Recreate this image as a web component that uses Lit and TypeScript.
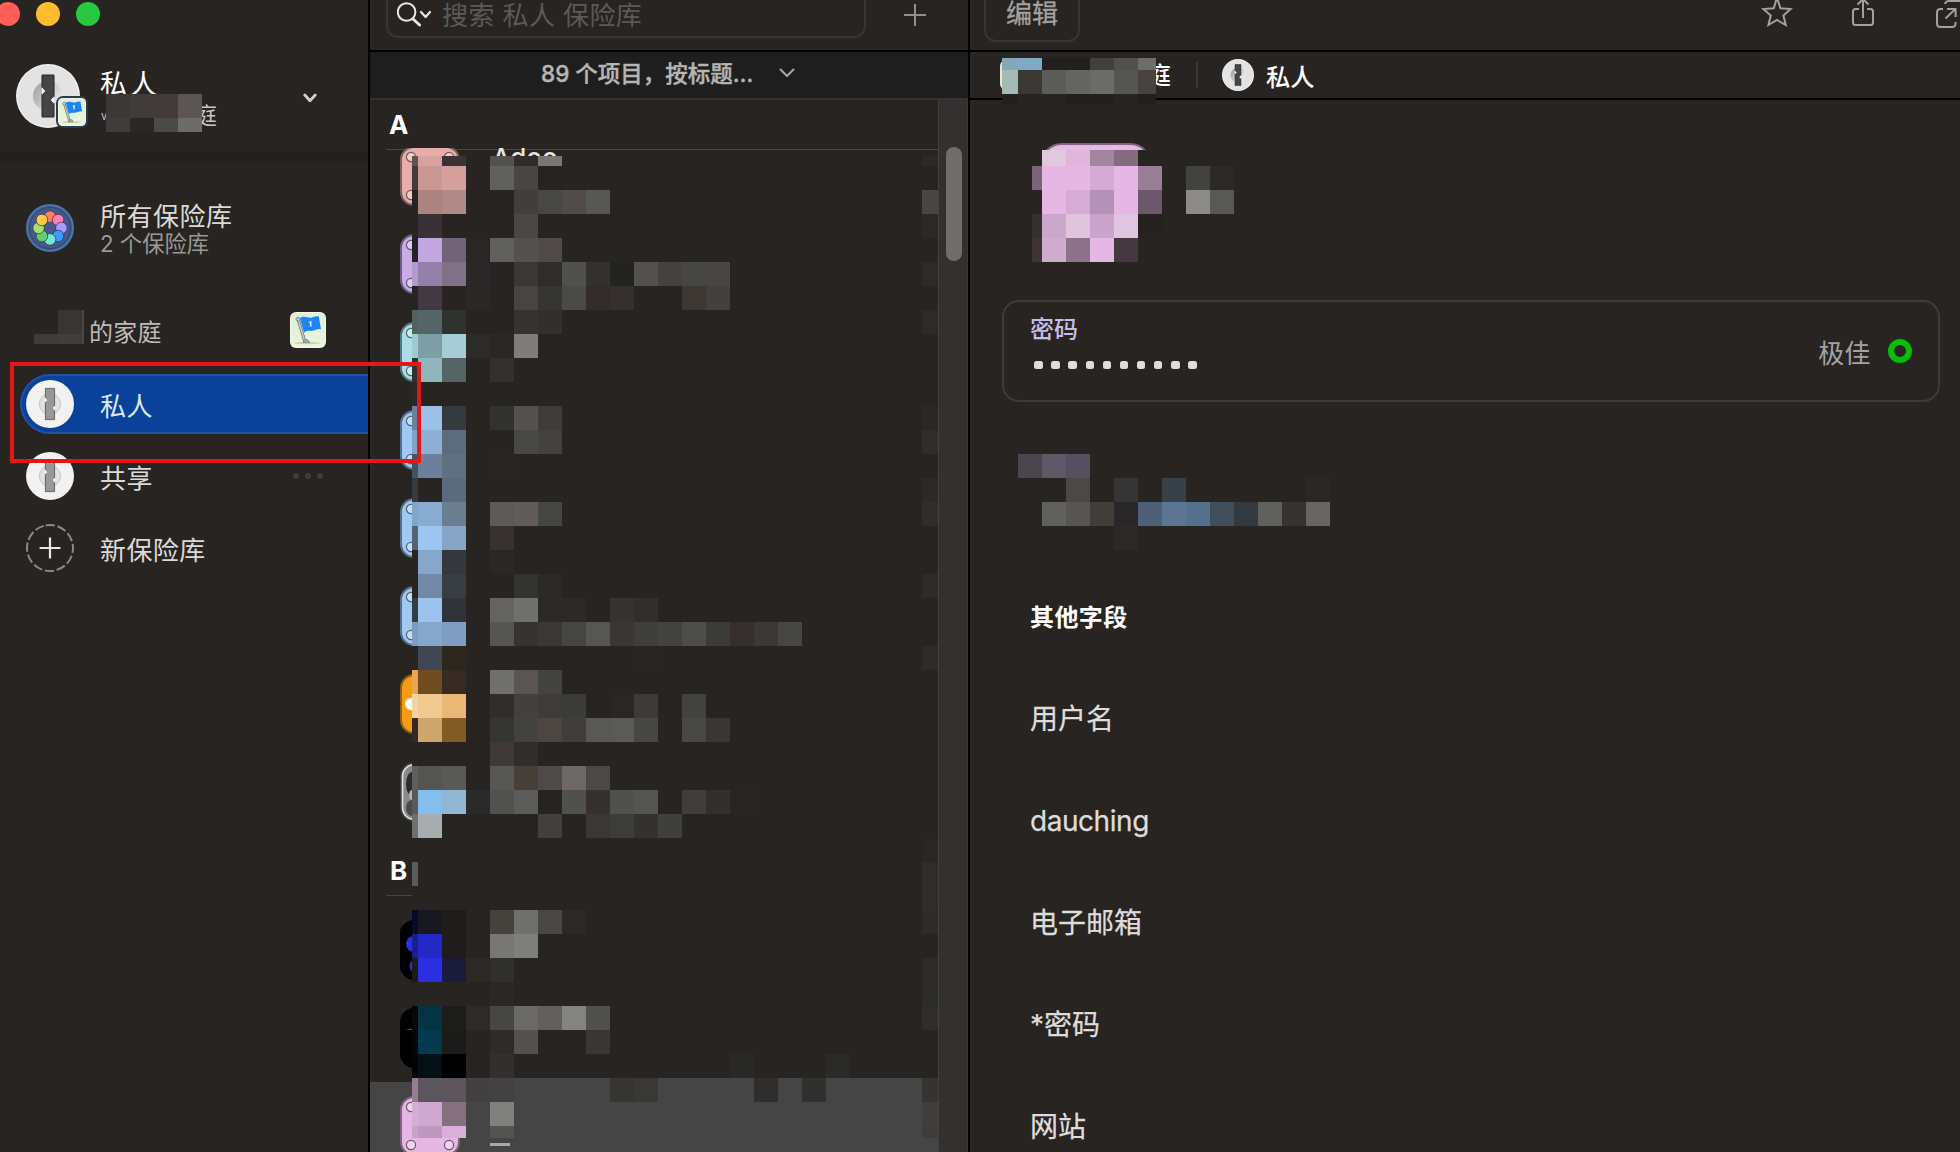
import { LitElement, html, css, svg } from "lit";
import { customElement, property } from "lit/decorators.js";

/** One filled block of a pixelated area: x, y, width, height, colour. */
type Block = [number, number, number, number, string];

const BG = "#272421";

/** Column 0 is a 6px sliver, column R is the 16px strip beside the scrollbar. */
const LIST_ROWS: string[] = [
  "0:5e5452 1:d8a19f 2:3d3232 4:51524f 5:302c29 6:787775 R:2c2926",
  "0:463a39 1:ca9894 2:d49f9c 4:60615e 5:4a4543 6:282321",
  "1:ad837f 2:b08a86 5:423e3a 6:474845 7:514b49 8:575754 R:484544",
  "1:383136 5:4b4743 R:2c2826",
  "0:242123 1:c2a6e0 2:716479 3:2a2626 4:60605e 5:555150 6:504b48",
  "0:b698d0 1:957fab 2:827089 3:2b2728 5:3c3734 6:302c2a 7:50514f 8:34302d 9:232322 10:555150 11:46413e 12:464744 13:494543 R:2d2a29",
  "1:423943 3:2b2725 5:484541 6:353634 7:4a4b48 8:322d2b 9:35302d 12:3d3834 13:444040",
  "0:536163 1:546567 2:303230 5:353231 6:332f2e R:2d2a27",
  "0:9ecbd1 1:7e9ea6 2:a6cdd6 3:2d2b29 4:2b2727 5:7e7d7a",
  "0:2d3333 1:90b6be 2:556465 4:34302e",
  "0:292928",
  "0:68829b 1:9ac2ea 2:343a3e 4:32322f 5:555150 6:403b39 R:2a2726",
  "0:7fa2c7 1:8eb0d7 2:5c6b7e 5:484845 6:454140 R:302d2c",
  "0:475260 1:6c809c 2:607080 4:282522",
  "0:353b40 2:5b6a7c R:2c2926",
  "0:83a5ca 1:88acd2 2:6b7d91 4:5b5a57 5:615c5a 6:454643 R:302d2c",
  "0:55626f 1:9cc6ef 2:88a4c4 4:373231",
  "1:85a7cc 2:34383e 4:2b2724",
  "1:708aa8 2:383d41 5:333331 6:2c2928 R:2e2b2a",
  "0:353b40 1:9bc3ee 2:30333a 4:646360 5:70716d 6:2c2828 7:2b2a28 9:38332f 10:322e2c",
  "0:7c9cc0 1:85a7cc 2:7e9dc0 4:555552 5:38332f 6:3a3734 7:454643 8:565754 9:3a3634 10:3e3f3d 11:434341 12:4d4e4b 13:3b3b38 14:35302d 15:3c3834 16:464744",
  "1:3f4852 2:2c261f 10:292525 R:2e2b2a",
  "0:e9a551 1:6f4d20 2:372a22 4:70716d 5:5a5553 6:434441",
  "0:f5d2a4 1:f0c890 2:e9b876 4:312d2a 5:444040 6:3e3b38 7:3b3b38 9:2a2622 10:3e3a37 12:424340",
  "0:352a21 1:cfa76c 2:835c25 4:353633 5:42433f 6:4b4642 7:413d3b 8:585956 9:5a5b57 10:464744 12:484946 13:3b3634",
  "4:3f3a38 5:312d2a",
  "0:5f5f5d 1:555554 2:595957 4:575855 5:464039 6:4e4a48 7:6d6866 8:4c4846",
  "0:595958 1:82bfed 2:91b7d4 3:292b2b 4:525350 5:5c5c59 6:262321 7:50514e 8:36312e 9:50514e 10:555653 12:413d3b 13:332f2b 14:292525",
  "0:6f7070 1:a8aeb0 6:423f3d 8:3b3735 9:3c3c39 10:35312e 11:3f403d",
  "R:292624",
  "0:5b5b59 R:302c2a",
  "R:302c2a",
  "0:080a2c 1:171821 2:1e1d1b 4:46423e 5:70716d 6:4b4746 7:2b2826 R:2e2b2a",
  "0:1b1e8c 1:2529c3 2:201c1b 4:787774 5:7f7f7c",
  "0:1c1a1a 1:2a2fe0 2:191c3a 3:2b2826 4:30312f R:2e2b2a",
  "4:2b2726 R:2c2c2b",
  "0:080707 1:023444 2:1c1c1a 3:2e2a27 4:464744 5:6a6966 6:61605d 7:83837f 8:50514e R:312d2c",
  "0:040606 1:023a4d 2:1b1b19 4:2f2b28 5:555150 8:3a3635",
  "0:030404 1:031117 2:000000 4:342f2f 14:282826 18:2a2b29",
  "0:977c94 1:5d555d 2:5d555c 3:434041 4:444142 9:373532 10:3a3835 15:2f2e2c 17:30302e R:363431",
  "0:d4aed4 1:cfa7d0 2:84707f 4:80817f R:403e3d",
  "0:c8a2c8 1:be98be 2:dbafdc 4:535352 R:3f3d3c",
];

/** Expands the row strings into blocks, relative to (412, 156) of the window. */
function listBlocks(): Block[] {
  const out: Block[] = [
    [0, 0, 526, 922, BG],
    [0, 922, 526, 60, "#454545"],
  ];
  LIST_ROWS.forEach((row, r) => {
    const y = r === 0 ? 0 : 10 + 24 * (r - 1);
    const h = r === 0 ? 10 : r === 41 ? 12 : 24;
    for (const cell of row.split(" ")) {
      const [c, colour] = cell.split(":");
      const x = c === "R" ? 510 : c === "0" ? 0 : 6 + 24 * (Number(c) - 1);
      const w = c === "R" ? 16 : c === "0" ? 6 : 24;
      out.push([x, y, w, h, "#" + colour]);
    }
  });
  return out;
}

const ACCOUNT_BLOCKS: Block[] = [
  [0, 0, 24, 24, "#3c3837"], [24, 0, 48, 24, "#413c3a"], [72, 0, 24, 24, "#5b5655"],
  [0, 24, 24, 14, "#3f3c3b"], [24, 24, 24, 14, "#2a2725"], [48, 24, 24, 14, "#4a4a47"], [72, 24, 24, 14, "#6c6c69"],
];

const FAMILY_BLOCKS: Block[] = [
  [24, 0, 24, 24, "#393533"], [48, 0, 2, 34, "#4a4746"],
  [0, 24, 24, 10, "#3e3b3a"], [24, 24, 24, 10, "#413d3c"],
];

const CRUMB_BLOCKS: Block[] = [
  [0, 0, 154, 36, BG],
  [0, 0, 16, 12, "#84a8b8"], [16, 0, 24, 12, "#7faac6"], [40, 0, 48, 12, "#221f1f"],
  [88, 0, 24, 12, "#423f3d"], [112, 0, 24, 12, "#50514e"], [136, 0, 18, 12, "#6d6e6b"],
  [0, 12, 16, 24, "#a4bab5"], [16, 12, 24, 24, "#3a3936"], [40, 12, 24, 24, "#5b5b58"],
  [64, 12, 24, 24, "#646461"], [88, 12, 24, 24, "#6b6b68"], [112, 12, 24, 24, "#555552"], [136, 12, 18, 24, "#494340"],
  [0, 36, 154, 10, BG],
  [0, 36, 16, 10, "#221f1f"], [64, 36, 48, 10, "#221f1f"], [136, 36, 18, 10, "#221f1f"],
];

const TITLE_BLOCKS: Block[] = [
  [0, 0, 130, 112, BG],
  [10, 0, 24, 16, "#e0c8df"], [34, 0, 24, 16, "#e0b5de"], [58, 0, 24, 16, "#a485a1"], [82, 0, 24, 16, "#846b80"],
  [0, 16, 10, 24, "#7c647b"], [10, 16, 48, 24, "#e6b6e4"], [58, 16, 24, 24, "#d5abd3"], [82, 16, 24, 24, "#e6b6e4"], [106, 16, 24, 24, "#9a7e98"],
  [10, 40, 24, 24, "#e6b6e4"], [34, 40, 24, 24, "#d6acd5"], [58, 40, 24, 24, "#b491b7"], [82, 40, 24, 24, "#e6b6e4"], [106, 40, 24, 24, "#6d596b"],
  [0, 64, 10, 24, "#352f31"], [10, 64, 24, 24, "#caa7cb"], [34, 64, 24, 24, "#e2c3df"], [58, 64, 24, 24, "#caa2cc"], [82, 64, 24, 24, "#dfc5df"], [106, 64, 24, 24, "#262222"],
  [0, 88, 10, 24, "#3e3438"], [10, 88, 24, 24, "#d0abce"], [34, 88, 24, 24, "#8c738b"], [58, 88, 24, 24, "#e6b6e4"], [82, 88, 24, 24, "#43383d"],
  [154, 16, 24, 24, "#42433f"], [178, 16, 24, 24, "#2d2929"], [154, 40, 24, 24, "#8c8b87"], [178, 40, 24, 24, "#585956"],
];

const WEBSITE_BLOCKS: Block[] = [
  [0, 0, 24, 24, "#48454c"], [24, 0, 24, 24, "#5e5967"], [48, 0, 24, 24, "#55505e"],
  [48, 24, 24, 24, "#4c4846"], [96, 24, 24, 24, "#353536"], [144, 24, 24, 24, "#384048"], [288, 24, 24, 24, "#2b2725"],
  [24, 48, 24, 24, "#60605d"], [48, 48, 24, 24, "#585453"], [72, 48, 24, 24, "#413d39"], [96, 48, 24, 24, "#282628"],
  [120, 48, 24, 24, "#4c6077"], [144, 48, 24, 24, "#5b7593"], [168, 48, 24, 24, "#54708c"], [192, 48, 24, 24, "#404d5a"],
  [216, 48, 24, 24, "#333a3f"], [240, 48, 24, 24, "#60605e"], [264, 48, 24, 24, "#38332f"], [288, 48, 24, 24, "#676664"],
  [96, 72, 24, 24, "#2c2926"],
];

function mosaic(cls: string, w: number, h: number, blocks: Block[]) {
  return html`<svg class="mosaic ${cls}" width=${w} height=${h} shape-rendering="crispEdges">
    ${blocks.map(([x, y, bw, bh, c]) => svg`<rect x=${x} y=${y} width=${bw} height=${bh} fill=${c} />`)}
  </svg>`;
}

/** Round vault emblem: a disc with a notched keyhole bar. */
@customElement("vault-disc")
export class VaultDisc extends LitElement {
  @property() tone: "light" | "dark" = "light";
  static styles = css`
    :host { display: block; }
    svg { display: block; width: 100%; height: 100%; }
  `;
  render() {
    return this.tone === "dark"
      ? html`<svg viewBox="0 0 64 64">
          <defs>
            <linearGradient id="d" x1="0" y1="0" x2="1" y2="0.6"><stop offset="0" stop-color="#9a9a9a" /><stop offset="1" stop-color="#ededed" /></linearGradient>
          </defs>
          <circle cx="32" cy="32" r="32" fill="#e3e3e3" />
          <circle cx="32" cy="32" r="31" fill="none" stroke="#f1f1f1" stroke-width="1" />
          <circle cx="32" cy="32" r="15" fill="url(#d)" />
          <path d="M26 11H38V32.5L34.8 36L38 39.5V53H26V30.5L29.2 27L26 23.5Z" fill="#454545" stroke="#262626" stroke-width="1" />
          <path d="M26 23.5L29.4 27L26 30.5ZM38 32.5L34.6 36L38 39.5Z" fill="#f2f2f2" />
        </svg>`
      : html`<svg viewBox="0 0 48 48">
          <circle cx="24" cy="24" r="24" fill="#f2f2f2" />
          <circle cx="24" cy="24" r="10.6" fill="#e2e2e2" stroke="#bdbdbd" stroke-width="0.8" />
          <path d="M19.4 8.4H28.6V26L26.4 28L28.6 30.4V39.6H19.4V22L21.6 20L19.4 17.6Z" fill="#989898" stroke="#4e4e4e" stroke-width="0.8" />
          <path d="M18.8 17.4L21.8 20L18.8 22.4ZM29.2 25.6L26.2 28L29.2 30.8Z" fill="#f2f2f2" />
        </svg>`;
  }
}

/** Square badge with a blue flag on a pole. */
@customElement("flag-badge")
export class FlagBadge extends LitElement {
  static styles = css`
    :host { display: block; }
    svg { display: block; width: 100%; height: 100%; }
  `;
  render() {
    return html`<svg viewBox="0 0 36 36">
      <defs>
        <linearGradient id="g" x1="0" y1="0" x2="0" y2="1"><stop offset="0" stop-color="#ddeed9" /><stop offset="1" stop-color="#edf4dc" /></linearGradient>
      </defs>
      <rect width="36" height="36" rx="6" fill="#f1f8e6" />
      <rect x="1" y="1" width="34" height="34" rx="5" fill="url(#g)" />
      <ellipse cx="17" cy="31" rx="13" ry="1.2" fill="#c9d1bb" />
      <path d="M8.2 7.5L14.6 29" stroke="#6b7275" stroke-width="3" stroke-linecap="round" />
      <path d="M8.2 7.5L14.6 29" stroke="#c9ced0" stroke-width="1.5" stroke-linecap="round" />
      <circle cx="8" cy="7.2" r="2" fill="#c2c7ca" stroke="#71777a" stroke-width="0.8" />
      <path d="M13 30.6Q13.5 27.6 16 27.4Q18.8 27.4 19.6 30.6Z" fill="#a6acae" stroke="#6b7275" stroke-width="0.6" />
      <path d="M10 6.4C14 2.9 18 6.6 22 5.4C25 4.6 27 4.2 29 4.4C29.2 9 30.6 13 31 17.4C27 16.2 25.4 19 21.4 19C18.4 18.8 16.6 18.4 14 20.6Z" fill="#1a85f5" />
      <path d="M19.2 9.8L21.4 9V14.6H20V11.2H19.2Z" fill="#fff" />
    </svg>`;
  }
}

@customElement("item-tile")
export class ItemTile extends LitElement {
  @property() kind = "rivet";
  @property() fill = "#9fc9f3";
  @property() edge = "#55708c";
  static styles = css`
    :host { display: block; width: 60px; height: 60px; flex: none; }
    svg { display: block; }
  `;
  render() {
    const body = svg`<rect x="1" y="1" width="58" height="58" rx="13" fill=${this.fill} stroke=${this.edge} stroke-width="2" />`;
    const details =
      this.kind === "rivet"
        ? [[11, 11], [49, 11], [11, 49], [49, 49]].map(
            ([x, y]) => svg`<circle cx=${x} cy=${y} r="4.6" fill="#fff" fill-opacity="0.4" stroke="#3b3a40" stroke-opacity="0.75" stroke-width="1.2" />`)
        : this.kind === "dot"
          ? svg`<circle cx="11" cy="30" r="6" fill="#fff" />`
          : this.kind === "mono"
            ? svg`<rect x="2.5" y="2.5" width="55" height="55" rx="12" fill="#8a8a8a" stroke="#e4e4e4" stroke-width="1.6" /><ellipse cx="12" cy="22" rx="6" ry="12" fill="#2c2c2c" /><ellipse cx="12" cy="33" rx="3" ry="5" fill="#b5b5b5" /><ellipse cx="12" cy="46" rx="6" ry="8" fill="#4a4a4a" />`
            : this.kind === "blue"
              ? svg`<circle cx="14" cy="24" r="8" fill="#2a2fe0" /><circle cx="17" cy="46" r="7.5" fill="#2a2fe0" />`
              : this.kind === "wing"
                ? svg`<path d="M5 22L12 20.4V22Z" fill="#1f6678" />`
                : null;
    return html`<svg width="60" height="60">${body}${details}</svg>`;
  }
}

const PETALS = ["#ff7d60", "#ff7db2", "#a89bff", "#3b9bff", "#73e8cb", "#64cd74", "#a1e16c", "#ffca47"];

@customElement("app-root")
export class AppRoot extends LitElement {
  static styles = css`
    :host {
      display: block; width: 1960px; height: 1152px; overflow: hidden; position: relative;
      background: #272421; color: #dcdad8;
      font-family: "Inter", "Noto Sans CJK SC", sans-serif; font-size: 26px;
    }
    * { box-sizing: border-box; }
    svg { display: block; flex: none; }
    .window { display: grid; grid-template-columns: 368px 598px 1fr; column-gap: 2px; height: 1152px; background: #000; }
    .pane { background: #272421; min-width: 0; overflow: hidden; position: relative; white-space: nowrap; }
    .mosaic { position: absolute; }

    .lights { display: flex; gap: 16px; margin-left: -4px; padding-top: 2px; }
    .light { width: 24px; height: 24px; border-radius: 50%; }
    .red { background: #ff5f57; } .yellow { background: #febc2e; } .green { background: #28c840; }
    .account { display: flex; height: 64px; margin-top: 38px; padding-left: 16px; position: relative; }
    .avatar { width: 64px; height: 64px; }
    .avatar-badge { position: absolute; left: 56px; top: 32px; width: 32px; height: 32px; padding: 2px; border-radius: 7px; background: #2b3a4d; }
    .account-text { margin-left: 20px; width: 203px; color: #fff; }
    .account-name { height: 36px; line-height: 36px; letter-spacing: 3px; font-size: 27px; margin-top: 3px; }
    .account-sub { height: 26px; line-height: 26px; font-size: 22.5px; color: #c9c7c5; display: flex; justify-content: space-between; width: 117px; }
    .account-initial { font-size: 11px; padding-left: 1px; }
    .account svg.chev { margin-top: 28px; }
    .m-account { left: 106px; top: 30px; }
    .band { height: 12px; margin-top: 24px; background: linear-gradient(#221f1f, #242120 60%, #272421); }
    .all { display: flex; align-items: center; height: 64px; margin-top: 32px; padding-left: 26px; gap: 26px; }
    .all-title { height: 34px; line-height: 34px; letter-spacing: 0.5px; }
    .all-sub { height: 26px; line-height: 26px; font-size: 22.3px; color: #9b9997; margin-top: -4px; padding-top: 1px; }
    .family { display: flex; align-items: center; justify-content: space-between; height: 36px; margin-top: 52px; padding: 0 42px 0 89px; font-size: 24px; color: #bebcba; position: relative; }
    .family flag-badge { width: 36px; height: 36px; }
    .family-name { letter-spacing: 0.2px; }
    .m-family { left: 34px; top: -2px; }
    .vaults { display: flex; flex-direction: column; gap: 12px; margin-top: 26px; padding-left: 20px; }
    .vault { display: flex; align-items: center; height: 60px; padding-left: 6px; gap: 26px; letter-spacing: 0.4px; }
    .vault vault-disc { width: 48px; height: 48px; }
    .vault-label { padding-top: 1px; flex: 1; }
    .vault .more { display: flex; gap: 6px; margin-right: 45px; }
    .more-dot { width: 6px; height: 6px; border-radius: 50%; background: #403d3b; }
    .vault.on { background: #0a429b; border: 2px solid #1d52a5; border-right: 0; border-radius: 30px 0 0 30px; padding-left: 4px; color: #dfe7f5; }

    .list { display: flex; flex-direction: column; }
    .list-tools { height: 50px; display: flex; padding-left: 16px; }
    .search { width: 480px; height: 52px; margin-top: -14px; border: 2px solid #383533; border-radius: 12px; padding: 5px 0 0 9px; display: flex; align-items: center; gap: 11px; color: #5c5957; letter-spacing: 0.4px; }
    .search-hint { padding-bottom: 3px; }
    .add { margin: 4px 0 0 38px; }
    .sort { height: 50px; border-top: 2px solid #000; border-bottom: 2px solid #343232; background: #1e1e1e; display: flex; align-items: center; padding: 0 0 7px 171px; gap: 26px; font-size: 22.5px; font-weight: 500; color: #b7b5b4; -webkit-text-stroke: 0.4px #b7b5b4; }
    .scroller { flex: 1; display: flex; position: relative; min-height: 0; }
    .items { width: 568px; padding-top: 32px; overflow: hidden; }
    .track { width: 30px; background: #343030; border-left: 1px solid #434040; padding: 47px 0 0 7px; border-right: 1px solid #3a3737; }
    .thumb { width: 16px; height: 114px; border-radius: 8px; background: #6f6e6c; }
    .letter { position: absolute; left: 0; top: 0; width: 568px; height: 48px; background: #272421; padding-left: 19px; line-height: 50px; font-weight: 700; color: #fff; }
    .rule { position: absolute; left: 16px; right: 30px; top: 49px; height: 1px; background: #484544; }
    .group { height: 70px; padding-left: 20px; line-height: 70px; font-weight: 700; color: #fff; position: relative; }
    .group-rule { position: absolute; left: 16px; top: 59px; width: 500px; height: 1px; background: #484544; }
    .row { display: flex; height: 88px; padding: 14px 0 0 30px; gap: 32px; position: relative; }
    .row.on { background: #454545; }
    .row-name { line-height: 32px; margin-top: -4px; color: #e8e6e5; font-weight: 500; }
    .row-dash { width: 20px; height: 3px; background: #aaa9a9; margin: 47px 0 0 -2px; }
    .m-list { left: 42px; top: 156px; }

    .tools { height: 50px; display: flex; padding-left: 14px; }
    .edit { width: 96px; height: 42px; border: 2px solid #383533; border-top: 0; border-radius: 0 0 12px 12px; line-height: 28px; text-align: center; color: #a3a19f; -webkit-text-stroke: 0.3px #a3a19f; }
    .icons { margin-left: auto; }
    .crumbs { height: 50px; border-top: 2px solid #000; border-bottom: 2px solid #000; display: flex; align-items: center; padding-left: 30px; font-size: 24.2px; font-weight: 500; color: #fff; position: relative; }
    .crumb-badge { width: 30px; height: 30px; border-radius: 6px; background: #dfebd3; }
    .crumb-family { width: 141px; text-align: right; line-height: 44px; padding-top: 1px; }
    .crumb-sep { width: 2px; height: 26px; background: #3b3836; margin: 0 24px 0 25px; }
    .crumbs vault-disc { width: 32px; height: 32px; margin-right: 12px; }
    .m-crumbs { left: 32px; top: 6px; }
    .hero { height: 200px; padding: 43px 0 0 70px; position: relative; }
    .hero-tile { width: 112px; height: 112px; border-radius: 22px; background: #e8b8e6; border: 2px solid #7d667d; }
    .m-hero { left: 62px; top: 50px; }
    .card { height: 102px; margin: 0 20px 0 32px; border: 2px solid #3e3c3b; border-radius: 17px; display: flex; align-items: center; padding: 0 26px; }
    .card-main { flex: 1; height: 98px; }
    .label { font-size: 24px; font-weight: 500; color: #c5bde8; height: 30px; line-height: 30px; margin-top: 13px; }
    .dots { display: flex; gap: 8.6px; margin: 15.5px 0 0 4.3px; }
    .dot { width: 8.5px; height: 8.5px; border-radius: 2.5px; background: #dfdddc; }
    .grade { color: #a5a3a1; margin-right: 17px; letter-spacing: 0.4px; }
    .ring { width: 24px; height: 24px; border-radius: 50%; border: 6px solid #06be06; margin-top: -1px; }
    .site { height: 148px; position: relative; }
    .m-site { left: 48px; top: 52px; }
    .fields { padding: 51px 0 0 60px; font-size: 28px; color: #dfdddc; -webkit-text-stroke: 0.25px #dfdddc; }
    .fields-title { font-size: 24px; font-weight: 700; color: #fff; height: 34px; line-height: 34px; letter-spacing: 0.4px; -webkit-text-stroke: 0; }
    .field { height: 102px; line-height: 102px; }
    .field.latin { letter-spacing: -0.45px; }
    .fields-title + .field { margin-top: 32.5px; }

    .callout { position: absolute; left: 10px; top: 362px; width: 411px; height: 101px; border: 4px solid #e41717; }
  `;

  private renderSidebar() {
    return html`<aside class="pane">
      <div class="lights"><div class="light red"></div><div class="light yellow"></div><div class="light green"></div></div>
      <div class="account">
        <vault-disc class="avatar" tone="dark"></vault-disc>
        <div class="avatar-badge"><flag-badge></flag-badge></div>
        <div class="account-text">
          <div class="account-name">私人</div>
          <div class="account-sub"><span class="account-initial">v</span><span>庭</span></div>
        </div>
        <svg class="chev" width="14" height="12"><path d="M1.8 3L7 8.8L12.2 3" fill="none" stroke="#d3d1d0" stroke-width="2.8" stroke-linecap="round" stroke-linejoin="round" /></svg>
        ${mosaic("m-account", 96, 38, ACCOUNT_BLOCKS)}
      </div>
      <div class="band"></div>
      <div class="all">
        <svg width="48" height="48">
          <circle cx="24" cy="24" r="23" fill="#46598a" stroke="#4577ad" stroke-width="2" />
          <circle cx="24" cy="24" r="20.5" fill="none" stroke="#33446a" stroke-width="1" />
          ${PETALS.map((c, i) => {
            const a = (i * Math.PI) / 4;
            return svg`<circle cx=${24 + 11.4 * Math.sin(a)} cy=${24 - 11.4 * Math.cos(a)} r="5.8" fill=${c} stroke="#27304a" stroke-width="0.7" />`;
          })}
        </svg>
        <div><div class="all-title">所有保险库</div><div class="all-sub">2 个保险库</div></div>
      </div>
      <div class="family">
        <span class="family-name">的家庭</span><flag-badge></flag-badge>
        ${mosaic("m-family", 50, 34, FAMILY_BLOCKS)}
      </div>
      <div class="vaults">
        <div class="vault on"><vault-disc></vault-disc><span class="vault-label">私人</span></div>
        <div class="vault"><vault-disc></vault-disc><span class="vault-label">共享</span>
          <span class="more"><i class="more-dot"></i><i class="more-dot"></i><i class="more-dot"></i></span></div>
        <div class="vault">
          <svg width="48" height="48" fill="none">
            <circle cx="24" cy="24" r="23" stroke="#8b8987" stroke-width="2" stroke-dasharray="9.2 2.84" transform="rotate(-101 24 24)" />
            <path d="M24 13.6V34.4M13.6 24H34.4" stroke="#eae8e7" stroke-width="2.2" />
          </svg>
          <span class="vault-label">新保险库</span>
        </div>
      </div>
    </aside>`;
  }

  private renderList() {
    const tiles = [
      ["rivet", "#e8adab", "#7d5f5d"], ["rivet", "#c9abe8", "#6e5f80"], ["rivet", "#abdde6", "#547880"],
      ["rivet", "#9fc9f3", "#55708c"], ["rivet", "#9fc9f3", "#55708c"], ["rivet", "#9fc9f3", "#55708c"],
      ["dot", "#f59c12", "#8f5e10"], ["mono", "#8a8a8a", "#3a3a3a"],
    ];
    return html`<section class="pane list">
      <div class="list-tools">
        <div class="search">
          <svg width="34" height="28" fill="none" stroke="#e9e7e6" stroke-linecap="round" stroke-linejoin="round">
            <circle cx="9.6" cy="11" r="8.8" stroke-width="2" />
            <path d="M16 18L22.6 24" stroke-width="3" /><path d="M24 11L28.6 16L33 11" stroke-width="2.2" />
          </svg>
          <span class="search-hint">搜索 私人 保险库</span>
        </div>
        <svg class="add" width="22" height="22"><path d="M11 0V22M0 11H22" stroke="#92908e" stroke-width="2" /></svg>
      </div>
      <div class="sort"><span>89 个项目，按标题…</span>
        <svg width="16" height="12"><path d="M1.5 3.5L8 10L14.5 3.5" fill="none" stroke="#a9a7a6" stroke-width="2" stroke-linecap="round" stroke-linejoin="round" /></svg>
      </div>
      <div class="scroller">
        <div class="rule"></div>
        <div class="items">
          ${tiles.map(([k, f, e], i) => html`<div class="row"><item-tile kind=${k} fill=${f} edge=${e}></item-tile>
            ${i === 0 ? html`<span class="row-name">Adoo</span>` : null}</div>`)}
          <div class="group">B<div class="group-rule"></div></div>
          <div class="row"><item-tile kind="blue" fill="#000" edge="#000"></item-tile></div>
          <div class="row"><item-tile kind="wing" fill="#000" edge="#000"></item-tile></div>
          <div class="row on"><item-tile fill="#e6b6e4" edge="#7d667d"></item-tile><div class="row-dash"></div></div>
        </div>
        <div class="track"><div class="thumb"></div></div>
        <div class="letter">A</div>
      </div>
      ${mosaic("m-list", 526, 982, listBlocks())}
    </section>`;
  }

  private renderDetail() {
    return html`<main class="pane">
      <div class="tools">
        <div class="edit">编辑</div>
        <svg class="icons" width="200" height="32" fill="none" stroke="#a3a09e" stroke-width="2" stroke-linejoin="round">
          <path d="M17 -2.6L20.4 8.2L30.6 9L23.4 15.6L25.8 25L17 20L8.4 25L10.8 15.6L3.4 9L13.8 8.2Z" stroke-linejoin="miter" />
          <path d="M99 9H95.5Q93 9 93 11.5V22.5Q93 25 95.5 25H110.5Q113 25 113 22.5V11.5Q113 9 110.5 9H107M103 18V0M97.5 4.5L103 -1L108.5 4.5" />
          <path d="M183 9H180.5Q177 9 177 12.5V23.5Q177 27 180.5 27H192Q195.5 27 195.5 23.5V22M185.5 18.5L195 9.4M187 9H195.6V17M185 4Q185.5 1 189 1H202" />
        </svg>
      </div>
      <div class="crumbs">
        <div class="crumb-badge"></div><span class="crumb-family">庭</span>
        <div class="crumb-sep"></div>
        <vault-disc tone="dark"></vault-disc><span>私人</span>
        ${mosaic("m-crumbs", 154, 46, CRUMB_BLOCKS)}
      </div>
      <div class="hero"><div class="hero-tile"></div>${mosaic("m-hero", 202, 112, TITLE_BLOCKS)}</div>
      <div class="card">
        <div class="card-main">
          <div class="label">密码</div>
          <div class="dots">${Array.from({ length: 10 }, () => html`<i class="dot"></i>`)}</div>
        </div>
        <span class="grade">极佳</span><div class="ring"></div>
      </div>
      <div class="site">${mosaic("m-site", 312, 96, WEBSITE_BLOCKS)}</div>
      <div class="fields">
        <div class="fields-title">其他字段</div>
        ${["用户名", "dauching", "电子邮箱", "*密码", "网站"].map(
          (t) => html`<div class="field ${/^[a-z]/.test(t) ? "latin" : ""}">${t}</div>`)}
      </div>
    </main>`;
  }

  render() {
    return html`<div class="window">${this.renderSidebar()}${this.renderList()}${this.renderDetail()}</div>
      <div class="callout"></div>`;
  }
}
